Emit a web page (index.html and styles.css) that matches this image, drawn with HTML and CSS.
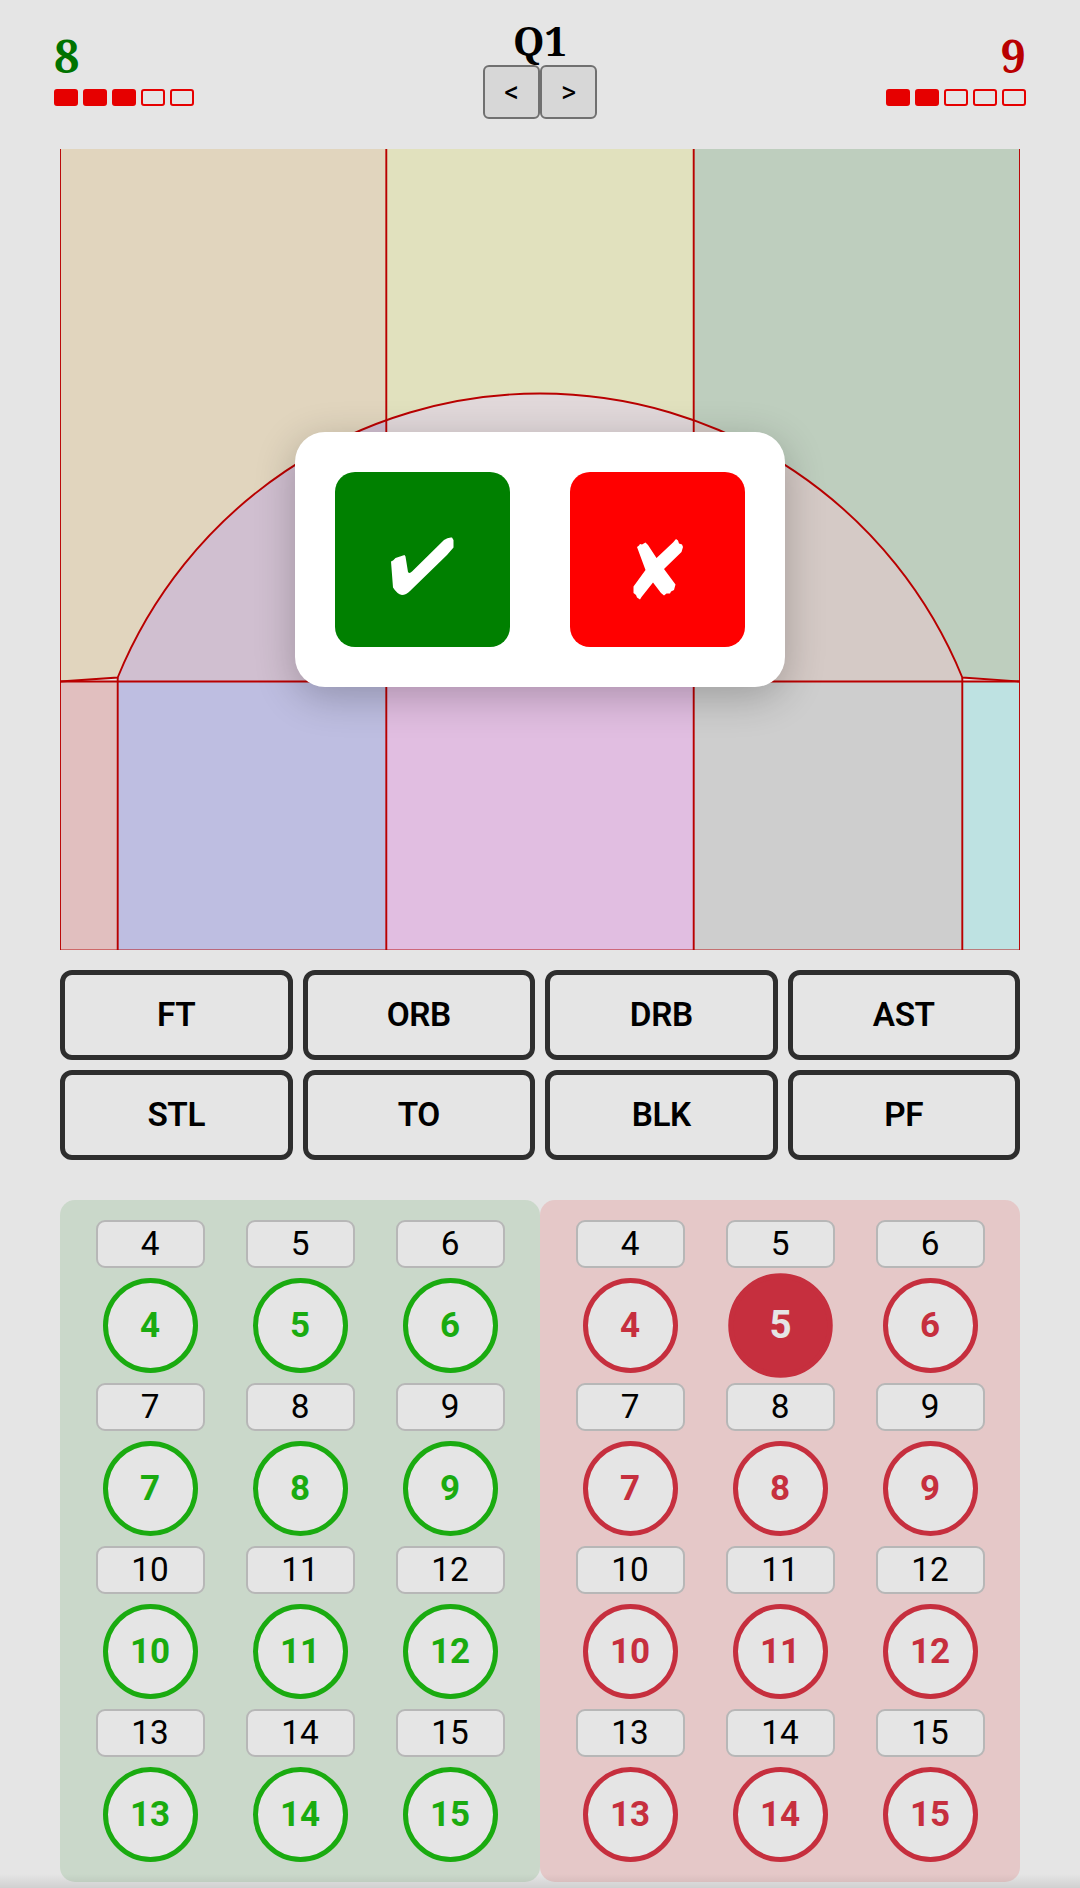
FILE: index.html
```html
<!DOCTYPE html>
<html lang="en">
<head>
<meta charset="utf-8">
<title>Basketball stats</title>
<link rel="stylesheet" href="styles.css">
</head>
<body>
<div class="app">
  <header class="scoreboard">
    <div class="team home"><div class="score">8</div><div class="fouls"><i class="on"></i><i class="on"></i><i class="on"></i><i></i><i></i></div></div>
    <div class="period"><div class="quarter">Q1</div><div class="nav"><button>&lt;</button><button>&gt;</button></div></div>
    <div class="team away"><div class="score">9</div><div class="fouls"><i class="on"></i><i class="on"></i><i></i><i></i><i></i></div></div>
  </header>
  <main class="court">
    <svg class="zones" viewBox="0 0 960 801">
      <path fill="#e1d5be" d="M0 0H326.3V271.5A456 456 0 0 0 57.7 528.5L0 532.5Z"/>
      <path fill="#e1e1be" d="M326.3 0H633.7V271.5A456 456 0 0 0 326.3 271.5Z"/>
      <path fill="#becebe" d="M633.7 0H960V532.5L902.3 528.5A456 456 0 0 0 633.7 271.5Z"/>
      <path fill="#d0bfd0" d="M57.7 528.5A456 456 0 0 1 326.3 271.5V532.5H57.7Z"/>
      <path fill="#e1d8da" d="M326.3 271.5A456 456 0 0 1 633.7 271.5V532.5H326.3Z"/>
      <path fill="#d5cac6" d="M633.7 271.5A456 456 0 0 1 902.3 528.5V532.5H633.7Z"/>
      <path fill="#e1bfbf" d="M0 532.5H57.7V801H0Z"/>
      <path fill="#bebee1" d="M57.7 532.5H326.3V801H57.7Z"/>
      <path fill="#e1bee1" d="M326.3 532.5H633.7V801H326.3Z"/>
      <path fill="#cecece" d="M633.7 532.5H902.3V801H633.7Z"/>
      <path fill="#bee2e2" d="M902.3 532.5H960V801H902.3Z"/>
      <g class="lines">
        <path d="M326.3 0V801M633.7 0V801M57.7 528.5V801M902.3 528.5V801M0 532.5H960"/>
        <path d="M0 532.5L57.7 528.5A456 456 0 0 1 902.3 528.5L960 532.5"/>
        <path d="M0 0V801M960 0V801"/>
        <path class="baseline" d="M0 800.5H960"/>
      </g>
    </svg>
    <div class="dialog">
      <button class="made" aria-label="Made"><svg viewBox="0 0 175 175"><path d="M56 89.500L58 88.500L60.500 86L69.500 83L70.500 84.500L73 100Q74.500 102 77 99.500L109 68Q113 65 117 65.500L118.500 68V75.500L112 83L75 119Q71 123 67 123Q62 122 58 115.500Z"/></svg></button>
      <button class="missed" aria-label="Missed"><svg viewBox="0 0 175 175"><path d="M67 75L69 73.500L70 72L72 72.500L75.500 70.500L78 73L86.500 86L103 70.500L106 67L108 68.500L109 71.500L112 72.500L113 75L111.500 80L94 97L105.500 112.500L104 118L101 119.500L100 121.500L96.500 121.500L94 123.500L91 121L83 110.500L71.500 125L70 127.500L67 125.500L66 123L63.500 121V114.500L75.500 98Z"/></svg></button>
    </div>
  </main>
  <section class="actions">
    <button>FT</button><button>ORB</button><button>DRB</button><button>AST</button>
    <button>STL</button><button>TO</button><button>BLK</button><button>PF</button>
  </section>
  <section class="rosters">
    <div class="roster green">
      <div class="player"><span>4</span><b>4</b></div><div class="player"><span>5</span><b>5</b></div><div class="player"><span>6</span><b>6</b></div>
      <div class="player"><span>7</span><b>7</b></div><div class="player"><span>8</span><b>8</b></div><div class="player"><span>9</span><b>9</b></div>
      <div class="player"><span>10</span><b>10</b></div><div class="player"><span>11</span><b>11</b></div><div class="player"><span>12</span><b>12</b></div>
      <div class="player"><span>13</span><b>13</b></div><div class="player"><span>14</span><b>14</b></div><div class="player"><span>15</span><b>15</b></div>
    </div>
    <div class="roster red">
      <div class="player"><span>4</span><b>4</b></div><div class="player"><span>5</span><b class="selected">5</b></div><div class="player"><span>6</span><b>6</b></div>
      <div class="player"><span>7</span><b>7</b></div><div class="player"><span>8</span><b>8</b></div><div class="player"><span>9</span><b>9</b></div>
      <div class="player"><span>10</span><b>10</b></div><div class="player"><span>11</span><b>11</b></div><div class="player"><span>12</span><b>12</b></div>
      <div class="player"><span>13</span><b>13</b></div><div class="player"><span>14</span><b>14</b></div><div class="player"><span>15</span><b>15</b></div>
    </div>
  </section>
  <div class="bottom-shade"></div>
</div>
</body>
</html>
```
FILE: styles.css
```css
* { box-sizing: border-box; }
body { margin: 0; background: #e5e5e5; font-family: Roboto, sans-serif; color: #000; }
button { font: inherit; color: inherit; padding: 0; margin: 0; }
.app { position: relative; width: 1080px; height: 1888px; overflow: hidden; }
.scoreboard { height: 149px; padding: 0 54px; display: flex; justify-content: space-between; }
.team { width: 140px; padding-top: 27px; }
.score { height: 62px; font: bold 45px/58px "Noto Serif", "Liberation Serif", serif; }
.home .score { color: #007300; }
.away .score { color: #b90000; text-align: right; }
.fouls { display: flex; gap: 5px; }
.fouls i { width: 24px; height: 17px; border: 2px solid #e60000; border-radius: 3px; }
.fouls .on { background: #e60000; }
.period { display: flex; flex-direction: column; align-items: center; }
.quarter { height: 65px; font: bold 40px/81px "Noto Serif", "Liberation Serif", serif; }
.nav { display: flex; }
.nav button { width: 57px; height: 54px; border: 2px solid #707070; border-radius: 6px; background: #d7d7d7; font: 400 29px/1 Roboto, sans-serif; }
.court { position: relative; height: 801px; margin: 0 60px; }
.zones { display: block; width: 960px; height: 801px; }
.lines { fill: none; stroke: #b90000; stroke-width: 1.9; }
.baseline { stroke-width: 1; opacity: .45; }
.dialog { position: absolute; left: 235px; top: 283px; width: 490px; height: 255px; padding: 40px; display: flex; gap: 60px; border-radius: 30px; background: #fff; box-shadow: 0 10px 40px rgba(0,0,0,.24); }
.dialog button { width: 175px; height: 175px; border: 0; border-radius: 20px; }
.dialog svg { display: block; width: 175px; height: 175px; fill: #fff; }
.made { background: #008000; }
.missed { background: #f00; }
.actions { margin: 20px 60px 0; display: grid; grid-template-columns: repeat(4, 1fr); grid-auto-rows: 90px; gap: 10px; }
.actions button { border: 5px solid #2e2e2e; border-radius: 12px; background: #e5e5e5; font-size: 33.33px; font-weight: 600; letter-spacing: -.4px; padding-bottom: 1px; }
.rosters { margin: 40px 60px 0; display: flex; }
.roster { width: 480px; height: 682px; padding: 20px 15px 0; border-radius: 15px; display: grid; grid-template-columns: repeat(3, 1fr); grid-auto-rows: 163px; }
.green { background: #cad8ca; --team: #1aab10; }
.red { background: #e5c8c8; --team: #c62f3e; }
.player { display: flex; flex-direction: column; align-items: center; gap: 10px; }
.player span { width: 109px; height: 48px; border: 2px solid #b7b7b7; border-radius: 9px; background: #e5e5e5; text-align: center; font-size: 33.33px; line-height: 44px; }
.player b { width: 95px; height: 95px; border: 5px solid var(--team); border-radius: 50%; background: #e5e5e5; color: var(--team); text-align: center; font-size: 35px; line-height: 85px; }
.player .selected { background: var(--team); color: #e5e5e5; transform: scale(1.1); }
.bottom-shade { position: absolute; left: 0; right: 0; bottom: 0; height: 14px; background: linear-gradient(transparent, rgba(0,0,0,.09)); }
```
